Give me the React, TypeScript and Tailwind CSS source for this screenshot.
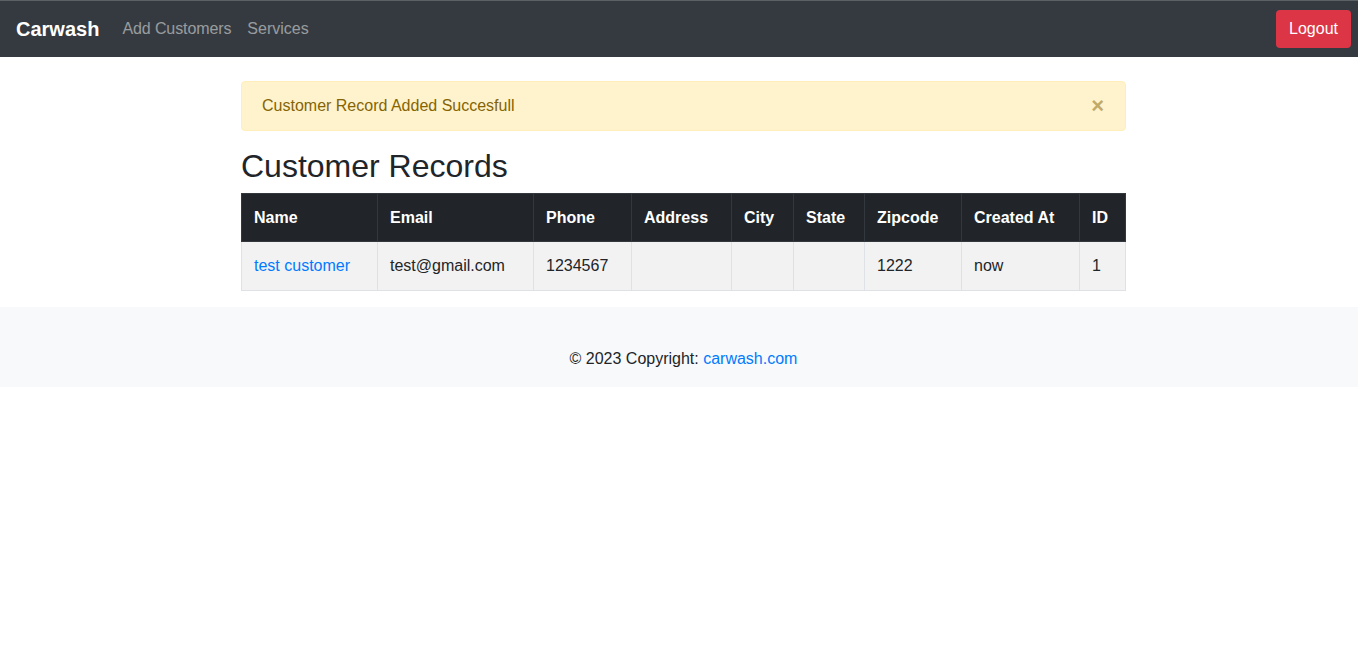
import React from 'react';

const columns = [
  { label: 'Name', w: 'w-[136px]' },
  { label: 'Email', w: 'w-[156px]' },
  { label: 'Phone', w: 'w-[98px]' },
  { label: 'Address', w: 'w-[100px]' },
  { label: 'City', w: 'w-[62px]' },
  { label: 'State', w: 'w-[71px]' },
  { label: 'Zipcode', w: 'w-[97px]' },
  { label: 'Created At', w: 'w-[118px]' },
  { label: 'ID', w: 'w-[46px]' },
];

const rows = [
  { name: 'test customer', email: 'test@gmail.com', phone: '1234567', address: '', city: '', state: '', zipcode: '1222', createdAt: 'now', id: '1' },
];

export default function App() {
  return (
    <div className="min-h-screen bg-white text-[#212529] font-['Liberation_Sans',Arial,sans-serif]">
      {/* Navbar */}
      <nav className="h-[57px] bg-[#343a40] border-t border-[#5c6166] flex items-center pl-4 pr-[7px]">
        <span className="text-white text-[20px] font-bold mr-[15px]">Carwash</span>
        <a href="#" className="px-2 text-[16px] text-white/50 tracking-[-0.1px]">Add Customers</a>
        <a href="#" className="px-2 text-[16px] text-white/50">Services</a>
        <button className="ml-auto h-[38px] px-[13px] rounded bg-[#dc3545] text-white text-[16px]">
          Logout
        </button>
      </nav>

      {/* Main */}
      <main className="ml-[241px] w-[885px] pt-6">
        <div className="h-[50px] flex items-center justify-between px-5 bg-[#fff3cd] border border-[#ffeeba] rounded text-[#856404] text-[16px]">
          <span>Customer Record Added Succesfull</span>
          <span className="text-[22px] font-bold leading-none opacity-50 mr-[1px]">×</span>
        </div>

        <h2 className="mt-4 mb-2 text-[32px] leading-[38px] font-medium">Customer Records</h2>

        <table className="w-[884px] border-collapse text-[16px] mb-4 table-fixed">
          <thead>
            <tr className="bg-[#212529] text-white">
              {columns.map((c) => (
                <th key={c.label} className={`${c.w} h-[48px] px-3 text-left font-bold border border-[#32383e]`}>
                  {c.label}
                </th>
              ))}
            </tr>
          </thead>
          <tbody>
            {rows.map((r) => (
              <tr key={r.id} className="bg-[#f2f2f2]">
                <td className="h-[49px] px-3 border border-[#dee2e6]">
                  <a href="#" className="text-[#007bff]">{r.name}</a>
                </td>
                <td className="px-3 border border-[#dee2e6]">{r.email}</td>
                <td className="px-3 border border-[#dee2e6]">{r.phone}</td>
                <td className="px-3 border border-[#dee2e6]">{r.address}</td>
                <td className="px-3 border border-[#dee2e6]">{r.city}</td>
                <td className="px-3 border border-[#dee2e6]">{r.state}</td>
                <td className="px-3 border border-[#dee2e6]">{r.zipcode}</td>
                <td className="px-3 border border-[#dee2e6]">{r.createdAt}</td>
                <td className="px-3 border border-[#dee2e6]">{r.id}</td>
              </tr>
            ))}
          </tbody>
        </table>
      </main>

      {/* Footer */}
      <footer className="bg-[#f8f9fa] pt-[40px] pb-[16px] pl-[9px] text-center text-[16px] leading-6">
        © 2023 Copyright: <a href="#" className="text-[#007bff]">carwash.com</a>
      </footer>
    </div>
  );
}
